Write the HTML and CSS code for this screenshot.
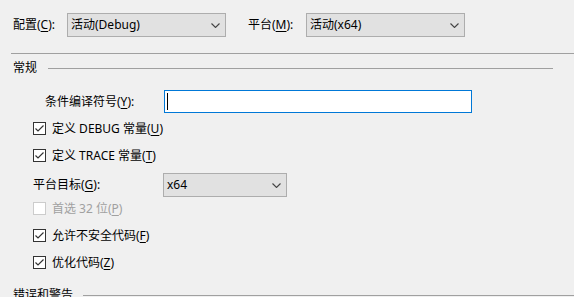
FILE: index.html
```html
<!DOCTYPE html>
<html lang="zh-CN">
<head>
<meta charset="utf-8">
<link rel="stylesheet" href="styles.css">
</head>
<body>
<div class="page">
  <div class="top">
    <span class="lbl lbl-cfg">配置(<u>C</u>):</span>
    <div class="combo"><span>活动(Debug)</span><svg class="chev" width="9" height="5" viewBox="0 0 9 5"><polyline points="0.5,0.5 4.5,4.5 8.5,0.5" fill="none" stroke="#444" stroke-width="1.1"/></svg></div>
    <span class="lbl lbl-plat">平台(<u>M</u>):</span>
    <div class="combo"><span>活动(x64)</span><svg class="chev" width="9" height="5" viewBox="0 0 9 5"><polyline points="0.5,0.5 4.5,4.5 8.5,0.5" fill="none" stroke="#444" stroke-width="1.1"/></svg></div>
  </div>
  <div class="rule"></div>

  <div class="section"><span>常规</span><div class="sline"></div></div>

  <div class="field">
    <span class="flabel">条件编译符号(<u>Y</u>):</span>
    <div class="input"><div class="caret"></div></div>
  </div>

  <div class="check c1"><span class="box on"><svg width="11" height="11" viewBox="0 0 11 11"><polyline points="1.5,5.5 4,8 9.5,2.5" fill="none" stroke="#333" stroke-width="1.2"/></svg></span><span>定义&nbsp;DEBUG 常量(<u>U</u>)</span></div>
  <div class="check c2"><span class="box on"><svg width="11" height="11" viewBox="0 0 11 11"><polyline points="1.5,5.5 4,8 9.5,2.5" fill="none" stroke="#333" stroke-width="1.2"/></svg></span><span>定义&nbsp;TRACE 常量(<u>T</u>)</span></div>

  <div class="target">
    <span class="tlabel">平台目标(<u>G</u>):</span>
    <div class="combo combo-t"><span>x64</span><svg class="chev" width="9" height="5" viewBox="0 0 9 5"><polyline points="0.5,0.5 4.5,4.5 8.5,0.5" fill="none" stroke="#444" stroke-width="1.1"/></svg></div>
  </div>

  <div class="check c3 disabled"><span class="box"></span><span>首选 32 位(<u>P</u>)</span></div>
  <div class="check c4"><span class="box on"><svg width="11" height="11" viewBox="0 0 11 11"><polyline points="1.5,5.5 4,8 9.5,2.5" fill="none" stroke="#333" stroke-width="1.2"/></svg></span><span>允许不安全代码(<u>F</u>)</span></div>
  <div class="check c4"><span class="box on"><svg width="11" height="11" viewBox="0 0 11 11"><polyline points="1.5,5.5 4,8 9.5,2.5" fill="none" stroke="#333" stroke-width="1.2"/></svg></span><span>优化代码(<u>Z</u>)</span></div>

  <div class="section s2"><span>错误和警告</span><div class="sline"></div></div>
</div>
</body>
</html>
```

FILE: styles.css
```css
html, body {
  margin: 0;
  padding: 0;
  background: #f0f0f0;
  overflow: hidden;
}
.page {
  width: 574px;
  height: 297px;
  overflow: hidden;
  font-family: "Noto Sans", "Noto Sans CJK SC", sans-serif;
  font-size: 12px;
  color: #000;
  line-height: 16px;
}
u {
  text-decoration: underline;
  text-underline-offset: 2px;
}
.top {
  display: flex;
  align-items: center;
  padding: 13px 0 0 13px;
  height: 24px;
}
.lbl-cfg { width: 54px; }
.lbl-plat { width: 58px; margin-left: 22px; }
.combo {
  box-sizing: border-box;
  width: 159px;
  height: 24px;
  background: #e1e1e1;
  border: 1px solid #adadad;
  display: flex;
  align-items: center;
  justify-content: space-between;
  padding: 0 5px 0 3px;
}
.chev { margin-top: 1px; }
.rule {
  margin: 16px 0 0 11px;
  height: 1px;
  background: #a0a0a0;
}
.section {
  display: flex;
  align-items: center;
  width: 540px;
  padding-left: 13px;
  margin-top: 7px;
  height: 14px;
}
.sline {
  flex: 1;
  height: 1px;
  background: #a0a0a0;
  margin-left: 11px;
}
.field {
  display: flex;
  align-items: center;
  margin-top: 15px;
  height: 23px;
  padding-left: 45px;
}
.flabel { width: 119px; }
.input {
  box-sizing: border-box;
  width: 308px;
  height: 23px;
  background: #fff;
  border: 1px solid #0078d7;
  padding: 2px 0 0 2px;
}
.caret {
  width: 1px;
  height: 17px;
  background: #000;
}
.check {
  display: flex;
  align-items: center;
  height: 13px;
  padding-left: 33px;
}
.check .box {
  box-sizing: border-box;
  width: 13px;
  height: 13px;
  border: 1px solid #333;
  background: #fff;
  margin-right: 6px;
  display: flex;
  align-items: center;
  justify-content: center;
}
.check .box svg { display: block; }
.c1 { margin-top: 9px; }
.c2 { margin-top: 14px; }
.c3 { margin-top: 5px; }
.c4 { margin-top: 14px; }
.check.disabled { color: #a0a0a0; }
.check.disabled .box { border-color: #cccccc; }
.target {
  display: flex;
  align-items: center;
  margin-top: 11px;
  height: 24px;
  padding-left: 33px;
}
.tlabel { width: 130px; }
.combo-t { width: 124px; }
.s2 {
  margin-top: 19px;
  width: 561px;
}
.s2 .sline { margin-left: 10px; }
```
